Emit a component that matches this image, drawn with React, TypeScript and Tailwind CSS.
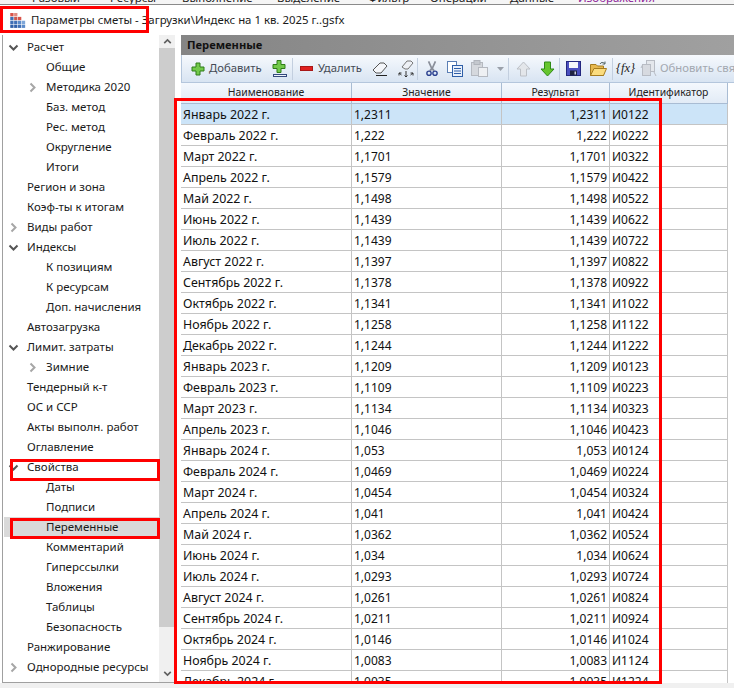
import React from 'react';

const FONT = 'font-["Noto_Sans",sans-serif]';

const rows: [string, string, string, string][] = [
  ['Январь 2022 г.', '1,2311', '1,2311', 'И0122'],
  ['Февраль 2022 г.', '1,222', '1,222', 'И0222'],
  ['Март 2022 г.', '1,1701', '1,1701', 'И0322'],
  ['Апрель 2022 г.', '1,1579', '1,1579', 'И0422'],
  ['Май 2022 г.', '1,1498', '1,1498', 'И0522'],
  ['Июнь 2022 г.', '1,1439', '1,1439', 'И0622'],
  ['Июль 2022 г.', '1,1439', '1,1439', 'И0722'],
  ['Август 2022 г.', '1,1397', '1,1397', 'И0822'],
  ['Сентябрь 2022 г.', '1,1378', '1,1378', 'И0922'],
  ['Октябрь 2022 г.', '1,1341', '1,1341', 'И1022'],
  ['Ноябрь 2022 г.', '1,1258', '1,1258', 'И1122'],
  ['Декабрь 2022 г.', '1,1244', '1,1244', 'И1222'],
  ['Январь 2023 г.', '1,1209', '1,1209', 'И0123'],
  ['Февраль 2023 г.', '1,1109', '1,1109', 'И0223'],
  ['Март 2023 г.', '1,1134', '1,1134', 'И0323'],
  ['Апрель 2023 г.', '1,1046', '1,1046', 'И0423'],
  ['Январь 2024 г.', '1,053', '1,053', 'И0124'],
  ['Февраль 2024 г.', '1,0469', '1,0469', 'И0224'],
  ['Март 2024 г.', '1,0454', '1,0454', 'И0324'],
  ['Апрель 2024 г.', '1,041', '1,041', 'И0424'],
  ['Май 2024 г.', '1,0362', '1,0362', 'И0524'],
  ['Июнь 2024 г.', '1,034', '1,034', 'И0624'],
  ['Июль 2024 г.', '1,0293', '1,0293', 'И0724'],
  ['Август 2024 г.', '1,0261', '1,0261', 'И0824'],
  ['Сентябрь 2024 г.', '1,0211', '1,0211', 'И0924'],
  ['Октябрь 2024 г.', '1,0146', '1,0146', 'И1024'],
  ['Ноябрь 2024 г.', '1,0083', '1,0083', 'И1124'],
  ['Декабрь 2024 г.', '1,0035', '1,0035', 'И1224'],
];

type Node = { label: string; level: 0 | 1; chevron?: 'open' | 'closed'; selected?: boolean };

const tree: Node[] = [
  { label: 'Расчет', level: 0, chevron: 'open' },
  { label: 'Общие', level: 1 },
  { label: 'Методика 2020', level: 1, chevron: 'closed' },
  { label: 'Баз. метод', level: 1 },
  { label: 'Рес. метод', level: 1 },
  { label: 'Округление', level: 1 },
  { label: 'Итоги', level: 1 },
  { label: 'Регион и зона', level: 0 },
  { label: 'Коэф-ты к итогам', level: 0 },
  { label: 'Виды работ', level: 0, chevron: 'closed' },
  { label: 'Индексы', level: 0, chevron: 'open' },
  { label: 'К позициям', level: 1 },
  { label: 'К ресурсам', level: 1 },
  { label: 'Доп. начисления', level: 1 },
  { label: 'Автозагрузка', level: 0 },
  { label: 'Лимит. затраты', level: 0, chevron: 'open' },
  { label: 'Зимние', level: 1, chevron: 'closed' },
  { label: 'Тендерный к-т', level: 0 },
  { label: 'ОС и ССР', level: 0 },
  { label: 'Акты выполн. работ', level: 0 },
  { label: 'Оглавление', level: 0 },
  { label: 'Свойства', level: 0, chevron: 'open' },
  { label: 'Даты', level: 1 },
  { label: 'Подписи', level: 1 },
  { label: 'Переменные', level: 1, selected: true },
  { label: 'Комментарий', level: 1 },
  { label: 'Гиперссылки', level: 1 },
  { label: 'Вложения', level: 1 },
  { label: 'Таблицы', level: 1 },
  { label: 'Безопасность', level: 1 },
  { label: 'Ранжирование', level: 0 },
  { label: 'Однородные ресурсы', level: 0, chevron: 'closed' },
];

function Chevron({ dir, className }: { dir: 'open' | 'closed' | 'up' | 'down'; className: string }) {
  const d = {
    open: 'M1.5 3.5 L5.5 7.5 L9.5 3.5',
    down: 'M1.5 3.5 L5.5 7.5 L9.5 3.5',
    up: 'M1.5 7.5 L5.5 3.5 L9.5 7.5',
    closed: 'M3.5 1.5 L7.5 5.5 L3.5 9.5',
  }[dir];
  return (
    <svg aria-hidden="true" width="11" height="11" viewBox="0 0 11 11" fill="none" className={className}>
      <path d={d} stroke="currentColor" strokeWidth="2" />
    </svg>
  );
}

function AppIcon() {
  const cells = [
    [0, 0, '#d9534a'], [4, 0, '#e08a80'], [4, 4, '#c9584f'], [8, 4, '#d9534a'],
    [0, 4, '#3f6fb5'], [0, 8, '#3f6fb5'], [4, 8, '#3f6fb5'], [8, 8, '#5b8bc9'], [12, 8, '#7ea6d8'],
    [0, 12, '#2f5fa8'], [4, 12, '#2f5fa8'], [8, 12, '#3f6fb5'], [12, 12, '#5b8bc9'],
  ] as const;
  return (
    <svg aria-hidden="true" width="16" height="15" viewBox="0 0 16 15.5">
      {cells.map(([x, y, c]) => (
        <rect key={`${x}-${y}`} x={x} y={y} width="3.4" height="3.4" fill={c} />
      ))}
    </svg>
  );
}

function PlusIcon() {
  return (
    <svg aria-hidden="true" width="14" height="14" viewBox="0 0 14 14">
      <path d="M5 1 H9 V5 H13 V9 H9 V13 H5 V9 H1 V5 H5 Z" fill="#72c94a" stroke="#2f7d18" strokeWidth="1" />
    </svg>
  );
}

function PlusLineIcon() {
  return (
    <svg aria-hidden="true" width="16" height="18" viewBox="0 0 16 18">
      <path d="M5 0.5 H9 V4.5 H13 V8.5 H9 V12.5 H5 V8.5 H1 V4.5 H5 Z" fill="#72c94a" stroke="#2f7d18" />
      <rect x="1.5" y="14.5" width="13" height="2" fill="#eef3fa" stroke="#34497d" strokeWidth="1" />
    </svg>
  );
}

function MinusIcon() {
  return (
    <svg aria-hidden="true" width="14" height="6" viewBox="0 0 14 6">
      <rect x="0.5" y="0.5" width="12" height="4" fill="#e02020" stroke="#a81818" />
    </svg>
  );
}

function EraserIcon() {
  return (
    <svg aria-hidden="true" width="17" height="16" viewBox="0 0 17 16">
      <path d="M1 9 L8 2 H12 L15 5 L9 12 H4 Z" fill="#f4f6fa" stroke="#555" />
      <path d="M4 14.5 H15" stroke="#222" strokeWidth="1" />
    </svg>
  );
}

function EraserArrowsIcon() {
  return (
    <svg aria-hidden="true" width="16" height="18" viewBox="0 0 16 18">
      <path d="M4 7 L9 1 H13 L15 3 L10 9 H7 Z" fill="#eef1f6" stroke="#777" />
      <path d="M8 11 V17 M6.5 15.5 L8 17 L9.5 15.5 M1 13 L3.5 15 M1 15.5 V13 H3.5 M15 13 L12.5 15 M15 15.5 V13 H12.5" stroke="#333" fill="none" />
    </svg>
  );
}

function CutIcon() {
  return (
    <svg aria-hidden="true" width="12" height="18" viewBox="0 0 14 18">
      <path d="M3 0 L7 9 L11 0 M4.5 11 L7 8 L9.5 11" stroke="#8a8f9a" strokeWidth="2" fill="none" />
      <circle cx="3.5" cy="14" r="2.5" fill="#dbe6f4" stroke="#2a3f8f" strokeWidth="1.6" />
      <circle cx="10.5" cy="14" r="2.5" fill="#dbe6f4" stroke="#2a3f8f" strokeWidth="1.6" />
    </svg>
  );
}

function CopyIcon() {
  return (
    <svg aria-hidden="true" width="16" height="16" viewBox="0 0 16 16">
      <rect x="0.5" y="0.5" width="9" height="11" fill="#fff" stroke="#5b7fb5" />
      <rect x="5.5" y="4.5" width="10" height="11" fill="#eaf1fb" stroke="#2f5fa8" />
      <path d="M7 7.5 H14 M7 10 H14 M7 12.5 H14" stroke="#2f5fa8" />
    </svg>
  );
}

function PasteIcon() {
  return (
    <svg aria-hidden="true" width="17" height="17" viewBox="0 0 17 17">
      <rect x="0.5" y="2.5" width="11" height="13" fill="#d5d8dd" stroke="#b5b9c0" />
      <rect x="3" y="0.5" width="6" height="4" fill="#c4c8ce" stroke="#b0b4bb" />
      <rect x="7.5" y="7.5" width="9" height="9" fill="#eef0f3" stroke="#b5b9c0" />
    </svg>
  );
}

function ArrowIcon({ dir, fill, stroke }: { dir: 'up' | 'down'; fill: string; stroke: string }) {
  const d = dir === 'up' ? 'M7.5 1 L14 8 H10.5 V15 H4.5 V8 H1 Z' : 'M4.5 1 H10.5 V8 H14 L7.5 15 L1 8 H4.5 Z';
  return (
    <svg aria-hidden="true" width="15" height="16" viewBox="0 0 15 16">
      <path d={d} fill={fill} stroke={stroke} />
    </svg>
  );
}

function SaveIcon() {
  return (
    <svg aria-hidden="true" width="15" height="15" viewBox="0 0 15 15">
      <rect x="0.5" y="0.5" width="14" height="14" fill="#4a4fc0" stroke="#23277f" />
      <rect x="3" y="1" width="9" height="6" fill="#f4f6fb" />
      <rect x="4" y="9.5" width="7" height="5" fill="#1f2340" />
      <rect x="8.5" y="10.5" width="1.5" height="3" fill="#c9cce0" />
    </svg>
  );
}

function FolderIcon() {
  return (
    <svg aria-hidden="true" width="17" height="16" viewBox="0 0 17 16">
      <path d="M0.5 3.5 H6 L7.5 5 H13.5 V14.5 H0.5 Z" fill="#e6b84f" stroke="#a67c1f" />
      <path d="M0.5 14.5 L4 7.5 H16.5 L13.5 14.5 Z" fill="#fbdc7e" stroke="#a67c1f" />
      <path d="M10 3 C11 1 13 1 15 2.5 M15 0.5 V3 H12.5" fill="none" stroke="#566" />
    </svg>
  );
}

function RefreshIcon() {
  return (
    <svg aria-hidden="true" width="18" height="18" viewBox="0 0 18 18">
      <rect x="6.5" y="0.5" width="8" height="11" fill="#e4e7ec" stroke="#b8bcc4" />
      <rect x="2.5" y="4.5" width="8" height="11" fill="#d7dae0" stroke="#b8bcc4" />
      <path d="M1 8 L3 4 M14 12 L16 16" stroke="#b8bcc4" />
    </svg>
  );
}

function Sep() {
  return <div className="w-px h-[22px] bg-[#c3cfdf] shrink-0" />;
}

function TreeRow({ node }: { node: Node }) {
  return (
    <div className={`relative h-[20px] flex items-center text-[11.5px] text-[#1a1a1a] whitespace-nowrap ${node.level === 0 ? 'pl-[23px]' : 'pl-[42px]'} ${node.selected ? 'bg-[#d9d9d9]' : ''}`}>
      {node.chevron && (
        <Chevron
          dir={node.chevron}
          className={`absolute top-[5px] ${node.level === 0 ? 'left-[4px]' : 'left-[23px]'} ${node.chevron === 'open' ? 'text-[#555555]' : 'text-[#a6a6a6]'}`}
        />
      )}
      <span>{node.label}</span>
    </div>
  );
}

export default function App() {
  return (
    <div className={`relative w-[734px] h-[688px] overflow-hidden bg-white flex flex-col ${FONT}`}>
      {/* Clipped ribbon tabs */}
      <div className="h-[5px] shrink-0 overflow-hidden border-b border-[#8a8a8a] bg-[#f5f5f5]">
        <div className="flex text-[11.5px] leading-[12px] -mt-[8px] pl-[32px] text-[#222]">
          <span className="w-[78px]">Разовый</span>
          <span className="w-[72px]">Ресурсы</span>
          <span className="w-[95px]">Выполнение</span>
          <span className="w-[91px]">Выделение</span>
          <span className="w-[62px]">Фильтр</span>
          <span className="w-[80px]">Операции</span>
          <span className="w-[68px]">Данные</span>
          <span className="text-[#8f1f9a]">Изображения</span>
        </div>
      </div>

      {/* Title */}
      <div className="h-[30px] shrink-0 flex items-center pl-[10px] gap-[5px] text-[11.4px] text-[#1a1a1a]">
        <AppIcon />
        <span>Параметры сметы - Загрузки\Индекс на 1 кв. 2025 г..gsfx</span>
      </div>

      <div className="flex h-[648px] shrink-0">
        {/* Tree panel */}
        <div className="w-[176px] shrink-0 ml-[2px] border-l border-b border-[#a0a0a0] flex bg-white">
          <div className="w-[156px] pt-[2px] pl-[1px] overflow-hidden">
            {tree.map((n) => (
              <TreeRow key={n.label} node={n} />
            ))}
          </div>
          <div className="w-[16px] bg-[#f0f0f0] flex flex-col items-center">
            <div className="h-[13px] flex items-center justify-center">
              <Chevron dir="up" className="text-[#606060] w-[9px] h-[9px]" />
            </div>
            <div className="w-full h-[579px] bg-[#cdcdcd]" />
            <div className="flex-1 flex items-end pb-[4px]">
              <Chevron dir="down" className="text-[#606060] w-[9px] h-[9px]" />
            </div>
          </div>
        </div>

        {/* Main panel */}
        <div className="ml-[3px] flex-1 min-w-0 flex flex-col">
          <div className="h-[20px] shrink-0 bg-gradient-to-r from-[#858585] to-[#a0a0a0] pl-[6px] flex items-center text-[11.2px] font-bold text-[#111]">
            Переменные
          </div>
          <div className="h-[28px] shrink-0 flex items-center whitespace-nowrap overflow-hidden text-[11.3px] text-[#444a55] border-l border-b border-[#b4c6dc] bg-gradient-to-b from-[#f6f9fd] to-[#d8e4f2]">
            <div className="ml-[9px] flex shrink-0"><PlusIcon /></div>
            <span className="ml-[4px] w-[52px] shrink-0">Добавить</span>
            <div className="ml-[11px] flex shrink-0"><PlusLineIcon /></div>
            <div className="ml-[4px]"><Sep /></div>
            <div className="ml-[7px] flex shrink-0"><MinusIcon /></div>
            <span className="ml-[4px] w-[44px] shrink-0">Удалить</span>
            <div className="ml-[10px] flex shrink-0"><EraserIcon /></div>
            <div className="ml-[9px] flex shrink-0"><EraserArrowsIcon /></div>
            <div className="ml-[3px]"><Sep /></div>
            <div className="ml-[8px] flex shrink-0"><CutIcon /></div>
            <div className="ml-[9px] flex shrink-0"><CopyIcon /></div>
            <div className="ml-[8px] flex shrink-0"><PasteIcon /></div>
            <svg aria-hidden="true" width="7" height="4" viewBox="0 0 7 4" className="ml-[9px] shrink-0"><path d="M0 0 H7 L3.5 4 Z" fill="#9aa0aa" /></svg>
            <div className="ml-[4px]"><Sep /></div>
            <div className="ml-[7px] flex shrink-0"><ArrowIcon dir="up" fill="#e3e6ea" stroke="#bcc0c6" /></div>
            <div className="ml-[9px] flex shrink-0"><ArrowIcon dir="down" fill="#66c52e" stroke="#2f8a16" /></div>
            <div className="ml-[4px]"><Sep /></div>
            <div className="ml-[6px] flex shrink-0"><SaveIcon /></div>
            <div className="ml-[9px] flex shrink-0"><FolderIcon /></div>
            <div className="ml-[5px]"><Sep /></div>
            <span className="ml-[3px] w-[18px] shrink-0 font-['Liberation_Serif',serif] italic text-[12.5px] text-[#222]">{'{fx}'}</span>
            <div className="ml-[6px] flex shrink-0"><RefreshIcon /></div>
            <span className="ml-[2px] text-[#a3a8b0]">Обновить связи</span>
          </div>

          {/* Table */}
          <div className="flex-1 min-h-0 overflow-hidden">
            <div className="grid grid-cols-[171px_150px_108px_118px] w-[547px] h-[21px] text-[10.4px] text-[#222] border-b border-[#a9bcd3] bg-gradient-to-b from-[#f4f8fd] to-[#e2ebf6]">
              {['Наименование', 'Значение', 'Результат', 'Идентификатор'].map((h) => (
                <div key={h} className="border-r border-[#a9bcd3] flex items-center justify-center">{h}</div>
              ))}
            </div>
            {rows.map((r, i) => (
              <div
                key={r[0]}
                className={`grid grid-cols-[171px_150px_108px_118px] w-[547px] h-[21px] text-[12px] text-[#111] border-b border-[#c4c4c4] ${i === 0 ? 'bg-[#cce4f8]' : 'bg-white'}`}
              >
                <div className="border-r border-[#c4c4c4] pl-[2px] pt-[2px] flex items-center overflow-hidden text-[12.4px] whitespace-nowrap">{r[0]}</div>
                <div className="border-r border-[#c4c4c4] pl-[2px] pt-[1px] flex items-center">{r[1]}</div>
                <div className="border-r border-[#c4c4c4] pr-[2px] pt-[1px] flex items-center justify-end">{r[2]}</div>
                <div className="border-r border-[#c4c4c4] pl-[2px] pt-[1px] flex items-center">{r[3]}</div>
              </div>
            ))}
          </div>
        </div>
      </div>

      <div className="h-[5px] shrink-0 bg-[#f0f0f0]" />

      {/* Red annotation frames */}
      <div className="absolute left-0 top-[6px] w-[149px] h-[27px] border-[3px] border-[#ff0000]" />
      <div className="absolute left-[10px] top-[459px] w-[150px] h-[22px] border-[3px] border-[#ff0000]" />
      <div className="absolute left-[10px] top-[518px] w-[150px] h-[21px] border-[3px] border-[#ff0000]" />
      <div className="absolute left-[174px] top-[98px] w-[488px] h-[586px] border-[3px] border-[#ff0000]" />
    </div>
  );
}
